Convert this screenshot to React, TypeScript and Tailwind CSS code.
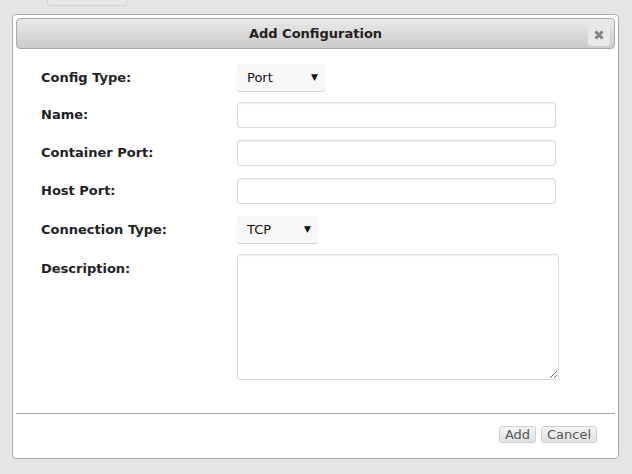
import React from "react";

function FakeSelect({ value, width }: { value: string; width: string }) {
  return (
    <div
      className={`${width} h-[27px] flex items-center justify-between pl-[10px] pr-[7px] rounded-[3px] bg-[#f7f7f7] shadow-[0_1px_1px_rgba(0,0,0,0.18)] text-[13px] text-[#111]`}
    >
      <span>{value}</span>
      <span className="text-[9px] leading-none text-[#111]">▼</span>
    </div>
  );
}

function TextInput() {
  return (
    <input
      type="text"
      className="w-[319px] h-[26px] rounded-[3px] border border-[#dcdcdc] bg-white shadow-[inset_0_1px_2px_rgba(0,0,0,0.06)] outline-none"
    />
  );
}

function Label({ children }: { children: React.ReactNode }) {
  return (
    <div className="w-[196px] shrink-0 text-[13px] font-bold text-[#222]">{children}</div>
  );
}

export default function App() {
  return (
    <div
      className="w-[632px] h-[474px] bg-[#e5e5e5] overflow-hidden flex flex-col"
      style={{ fontFamily: '"DejaVu Sans", Verdana, sans-serif' }}
    >
      <div className="ml-[47px] w-[80px] h-[6px] border border-t-0 border-[#d2d2d2] rounded-b-[3px] bg-[#e8e8e8]" />
      <div className="mt-[8px] ml-[12px] w-[607px] h-[445px] border border-[#aaaaaa] rounded-[4px] bg-white p-[3px] flex flex-col">
        <div className="relative h-[31px] shrink-0 rounded-[4px] border border-[#aaaaaa] bg-gradient-to-b from-[#e9e9e9] to-[#cbcbcb] flex items-center justify-center">
          <span className="text-[13px] font-bold text-[#222]">Add Configuration</span>
          <div className="absolute right-[4px] top-[5px] w-[22px] h-[22px] rounded-[3px] bg-[#e8e8e8] flex items-center justify-center">
            <svg width="10" height="10" viewBox="0 0 10 10">
              <path d="M1.5 1.5 L8.5 8.5 M8.5 1.5 L1.5 8.5" stroke="#858585" strokeWidth="3" strokeLinecap="butt" />
            </svg>
          </div>
        </div>
        <div className="flex-1 flex flex-col pl-[25px] pt-[15px]">
          <div className="flex items-center h-[27px]">
            <Label>Config Type:</Label>
            <FakeSelect value="Port" width="w-[88px]" />
          </div>
          <div className="flex items-center h-[26px] mt-[11px]">
            <Label>Name:</Label>
            <TextInput />
          </div>
          <div className="flex items-center h-[26px] mt-[12px]">
            <Label>Container Port:</Label>
            <TextInput />
          </div>
          <div className="flex items-center h-[26px] mt-[12px]">
            <Label>Host Port:</Label>
            <TextInput />
          </div>
          <div className="flex items-center h-[27px] mt-[12px]">
            <Label>Connection Type:</Label>
            <FakeSelect value="TCP" width="w-[81px]" />
          </div>
          <div className="flex items-start mt-[11px]">
            <div className="pt-[5px]">
              <Label>Description:</Label>
            </div>
            <textarea className="w-[322px] h-[126px] rounded-[3px] border border-[#dcdcdc] bg-white shadow-[inset_0_1px_2px_rgba(0,0,0,0.06)] outline-none" />
          </div>
        </div>
        <div className="h-[42px] shrink-0 border-t border-[#a8a8a8] flex justify-end items-start pt-[12px] pr-[18px] gap-[5px]">
          <button className="h-[17px] w-[37px] rounded-[3px] border border-[#cfcfcf] bg-gradient-to-b from-[#f4f4f4] to-[#e2e2e2] text-[13px] leading-none text-[#555]">
            Add
          </button>
          <button className="h-[17px] w-[56px] rounded-[3px] border border-[#cfcfcf] bg-gradient-to-b from-[#f4f4f4] to-[#e2e2e2] text-[13px] leading-none text-[#555]">
            Cancel
          </button>
        </div>
      </div>
    </div>
  );
}
